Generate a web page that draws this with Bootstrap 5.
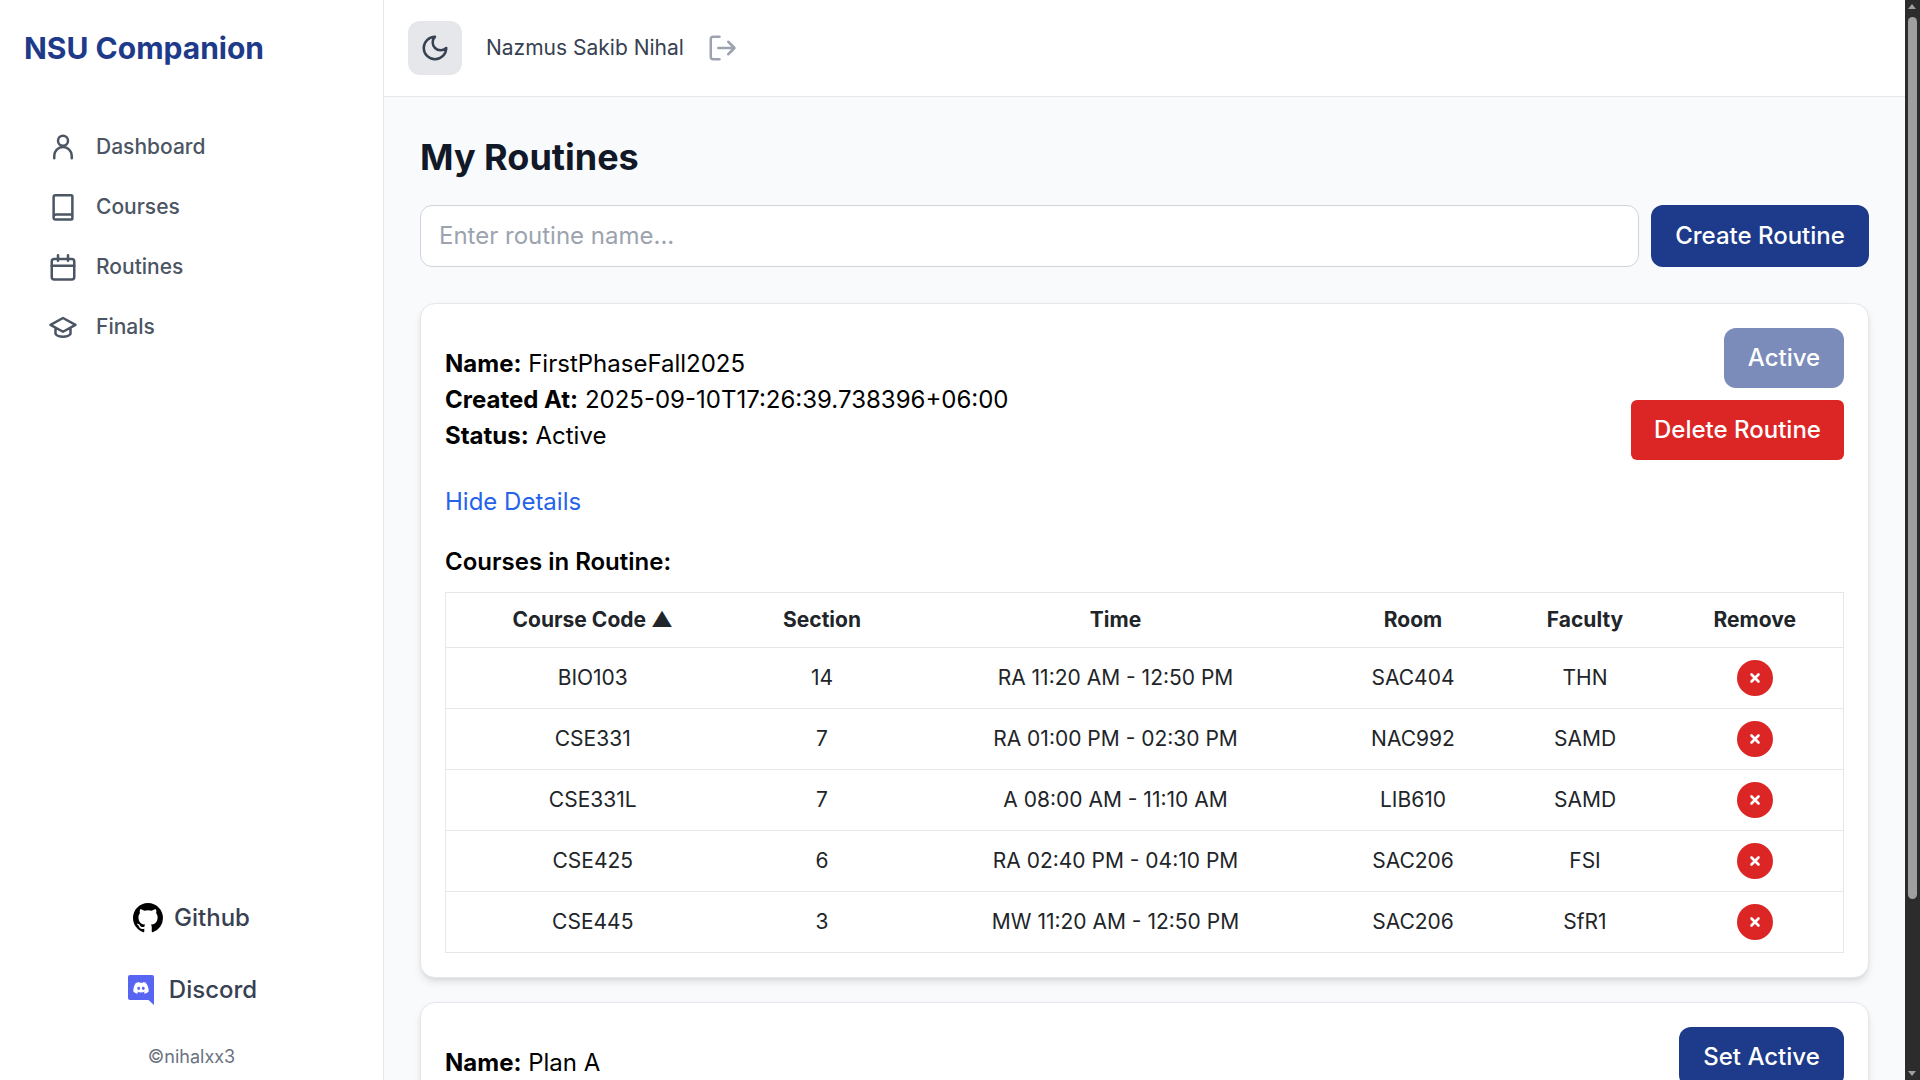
<!DOCTYPE html>
<html lang="en">
<head>
  <title>My Routines - NSU Companion</title>
  <link href="https://cdn.jsdelivr.net/npm/bootstrap@5.3.0/dist/css/bootstrap.min.css" rel="stylesheet" />
  <style>
    html, body { height: 100%; overflow: hidden; }
    body { font-family: Inter, "Liberation Sans", sans-serif; background: #f9fafb; color: #000; }
    .app-shell { height: 1080px; }
    .side-bar { width: 384px; background: #fff; border-right: 1px solid #e5e7eb; }
    .brand-name { font-size: 30px; font-weight: 700; line-height: 36px; color: #1e3a8a; padding: 30px 24px 0; }
    .side-nav { margin-top: 59px; padding: 0 48px; gap: 16px; }
    .side-link { height: 44px; gap: 18px; font-size: 21px; font-weight: 500; color: #4b5563; text-decoration: none; }
    .side-link svg { width: 30px; height: 30px; }
    .foot-link { font-size: 24px; font-weight: 500; color: #374151; text-decoration: none; line-height: 30px; }
    .gh-row { margin-bottom: 42px; gap: 11px; }
    .gh-row svg { width: 30px; height: 30px; }
    .dc-row { gap: 15px; padding-left: 2px; }
    .dc-row svg { width: 26px; height: 30px; }
    .copy-note { font-size: 18px; color: #6b7280; margin-top: 40px; margin-bottom: 11px; line-height: 24px; }
    .main-col { min-width: 0; }
    .top-bar { height: 97px; background: #fff; border-bottom: 1px solid #e5e7eb; padding: 0 24px; }
    .theme-btn { width: 54px; height: 54px; border: 0; border-radius: 12px; background: #e5e7eb; color: #374151; }
    .user-name { font-size: 21px; color: #374151; margin-left: 24px; margin-right: 23px; }
    .logout-ico { width: 30px; height: 30px; color: #9ca3af; }
    .page-body { padding: 30px 36px 0; }
    .page-title { font-size: 36px; font-weight: 700; line-height: 60px; color: #111827; margin-bottom: 18px; }
    .routine-input { height: 62px; font-size: 24px; border: 1px solid #d1d5db; border-radius: 12px; padding: 0 18px 2px; color: #111827; }
    .routine-input::placeholder { color: #9ca3af; }
    .btn-brand { background: #1e3a8a; color: #fff; border: 0; border-radius: 12px; font-size: 24px; font-weight: 500; padding: 0 24px; white-space: nowrap; }
    .btn-brand:hover { background: #1e3a8a; color: #fff; }
    .create-btn { height: 62px; margin-left: 12px; width: 218px; }
    .routine-card { border: 1px solid #e5e7eb; border-radius: 15px; background: #fff; padding: 24px; box-shadow: 0 5px 8px -1px rgba(0,0,0,.1), 0 2px 5px -2px rgba(0,0,0,.1); }
    .first-card { margin-top: 36px; height: 675px; }
    .next-card { margin-top: 24px; }
    .info-lines { font-size: 24px; line-height: 36px; padding-top: 18px; }
    .info-lines b { font-weight: 700; }
    .btn-active { height: 60px; width: 120px; padding: 0; opacity: .58; }
    .btn-set { height: 60px; width: 165px; padding: 0; }
    .btn-del { height: 60px; width: 213px; margin-top: 12px; background: #dc2626; color: #fff; border: 0; border-radius: 6px; font-size: 24px; font-weight: 500; white-space: nowrap; }
    .btn-del:hover { background: #dc2626; color: #fff; }
    .hide-link { display: block; font-size: 24px; line-height: 36px; color: #2563eb; text-decoration: none; margin-top: 24px; }
    .sub-head { font-size: 24px; font-weight: 600; line-height: 36px; margin: 24px 0 12px; }
    .course-table { table-layout: fixed; width: 100%; margin: 0; font-size: 21px; border-color: #e5e7eb; }
    .course-table th, .course-table td { padding: 0; text-align: center; vertical-align: middle; border: 1px solid #e5e7eb; border-left: 0; border-right: 0; }
    .course-table th { height: 55px; font-weight: 700; font-size: 21px; }
    .course-table td { height: 61px; font-weight: 400; }
    .course-table tr > :first-child { border-left: 1px solid #e5e7eb; }
    .course-table tr > :last-child { border-right: 1px solid #e5e7eb; padding-right: 4px; }
    .col-code { width: 294px; } .col-sect { width: 165px; } .col-time { width: 422px; }
    .col-room { width: 173px; } .col-fac { width: 171px; }
    .x-btn { display: block; margin: 0 auto; width: 36px; height: 36px; border: 0; border-radius: 50%; background: #dc2626; padding: 0; }
    .x-btn svg { width: 12px; height: 12px; display: block; margin: 0 auto; }
    .fake-scroll { width: 15px; background: #2c2c2c; position: relative; }
    .fake-thumb { position: absolute; left: 3px; right: 3px; top: 17px; height: 882px; background: #9f9f9f; border-radius: 5px; }
    .fake-arrow-up { position: absolute; top: 4px; left: 3px; border: 4.5px solid transparent; border-top: 0; border-bottom: 5px solid #9f9f9f; }
    .fake-arrow-down { position: absolute; bottom: 4px; left: 3px; border: 4.5px solid transparent; border-bottom: 0; border-top: 5px solid #9f9f9f; }
  </style>
</head>
<body>
  <div class="app-shell d-flex">
    <aside class="side-bar d-flex flex-column flex-shrink-0">
      <div class="brand-name">NSU Companion</div>
      <nav class="side-nav d-flex flex-column">
        <a class="side-link d-flex align-items-center" href="#">
          <svg viewBox="0 0 24 24" fill="none" stroke="currentColor" stroke-width="2" stroke-linecap="round" stroke-linejoin="round"><circle cx="12" cy="7" r="4"/><path d="M5 21v-2a7 7 0 0 1 14 0v2"/></svg>
          Dashboard
        </a>
        <a class="side-link d-flex align-items-center" href="#">
          <svg viewBox="0 0 24 24" fill="none" stroke="currentColor" stroke-width="2" stroke-linecap="round" stroke-linejoin="round"><path d="M4.500 20V4a1.500 1.500 0 0 1 1.500-1.500h12.500A1 1 0 0 1 19.500 3.500v17.500a1 1 0 0 1-1 1H6A1.500 1.500 0 0 1 4.500 20zm0 0A2 2 0 0 1 6.500 18h13"/></svg>
          Courses
        </a>
        <a class="side-link d-flex align-items-center" href="#">
          <svg viewBox="0 0 24 24" fill="none" stroke="currentColor" stroke-width="2" stroke-linecap="round" stroke-linejoin="round"><rect x="3" y="5.500" width="18" height="16.500" rx="2"/><path d="M8 2.500v4.500M16 2.500v4.500M3 11h18"/></svg>
          Routines
        </a>
        <a class="side-link d-flex align-items-center" href="#">
          <svg viewBox="0 0 24 24" fill="none" stroke="currentColor" stroke-width="2" stroke-linecap="round" stroke-linejoin="round"><path d="M12 4.800 2 10.300 12 15.800l10-5.500zM6 13v4.500c2 3 10 3 12 0V13"/></svg>
          Finals
        </a>
      </nav>
      <div class="mt-auto d-flex flex-column align-items-center">
        <a class="foot-link gh-row d-flex align-items-center" href="#">
          <svg viewBox="0 0 16 16" fill="#000"><path d="M8 0C3.58 0 0 3.58 0 8c0 3.54 2.29 6.53 5.47 7.59.4.07.55-.17.55-.38 0-.19-.01-.82-.01-1.49-2.01.37-2.53-.49-2.69-.94-.09-.23-.48-.94-.82-1.13-.28-.15-.68-.52-.01-.53.63-.01 1.08.58 1.23.82.72 1.21 1.87.87 2.33.66.07-.52.28-.87.51-1.07-1.78-.2-3.64-.89-3.64-3.95 0-.87.31-1.59.82-2.15-.08-.2-.36-1.02.08-2.12 0 0 .67-.21 2.2.82.64-.18 1.32-.27 2-.27s1.36.09 2 .27c1.53-1.04 2.2-.82 2.2-.82.44 1.1.16 1.92.08 2.12.51.56.82 1.27.82 2.15 0 3.07-1.87 3.75-3.65 3.95.29.25.54.73.54 1.48 0 1.07-.01 1.93-.01 2.2 0 .21.15.46.55.38A8.01 8.01 0 0 0 16 8c0-4.42-3.58-8-8-8z"/></svg>
          Github
        </a>
        <a class="foot-link dc-row d-flex align-items-center" href="#">
          <svg viewBox="0 0 26 30"><path fill="#5865f2" d="M2 0h22a2 2 0 0 1 2 2v28l-5.500-5H2a2 2 0 0 1-2-2V2a2 2 0 0 1 2-2z"/><path fill="#fff" d="M17.600 7.600a13 13 0 0 0-3.200-1l-.4.8a12 12 0 0 0-3.600 0l-.4-.8a13 13 0 0 0-3.200 1C4.700 10.600 4.200 13.500 4.400 16.400c1.300 1 2.600 1.600 3.900 2l.8-1.300-1.200-.6.3-.2c2.300 1.100 5.300 1.100 7.600 0l.3.2-1.200.6.8 1.300c1.300-.4 2.600-1 3.900-2 .3-3.300-.5-6.200-2.800-8.800zM9.700 14.500c-.8 0-1.400-.7-1.400-1.600s.6-1.600 1.400-1.600 1.400.7 1.400 1.600-.6 1.600-1.400 1.600zm4.600 0c-.8 0-1.400-.7-1.400-1.600s.6-1.600 1.400-1.600 1.400.7 1.400 1.600-.6 1.600-1.400 1.600z" transform="translate(1 .4)"/></svg>
          Discord
        </a>
        <div class="copy-note">©nihalxx3</div>
      </div>
    </aside>

    <div class="main-col flex-grow-1 d-flex flex-column">
      <header class="top-bar d-flex align-items-center flex-shrink-0">
        <button class="theme-btn d-flex align-items-center justify-content-center" type="button">
          <svg width="30" height="30" viewBox="0 0 24 24" fill="none" stroke="currentColor" stroke-width="2" stroke-linecap="round" stroke-linejoin="round"><path d="M12 3a6 6 0 0 0 9 9 9 9 0 1 1-9-9z"/></svg>
        </button>
        <span class="user-name">Nazmus Sakib Nihal</span>
        <svg class="logout-ico" viewBox="0 0 24 24" fill="none" stroke="currentColor" stroke-width="2" stroke-linecap="round" stroke-linejoin="round"><path d="M10 3H5a2 2 0 0 0-2 2v14a2 2 0 0 0 2 2h5M9 12h13M17 7l5 5-5 5"/></svg>
      </header>

      <main class="page-body flex-grow-1 overflow-hidden">
        <h1 class="page-title">My Routines</h1>
        <div class="d-flex">
          <input class="routine-input form-control flex-grow-1" type="text" placeholder="Enter routine name..." />
          <button class="btn btn-brand create-btn flex-shrink-0" type="button">Create Routine</button>
        </div>

        <section class="routine-card first-card">
          <div class="d-flex justify-content-between align-items-start">
            <div class="info-lines">
              <div><b>Name:</b> FirstPhaseFall2025</div>
              <div><b>Created At:</b> 2025-09-10T17:26:39.738396+06:00</div>
              <div><b>Status:</b> Active</div>
            </div>
            <div class="d-flex flex-column align-items-end">
              <button class="btn btn-brand btn-active" type="button">Active</button>
              <button class="btn btn-del" type="button">Delete Routine</button>
            </div>
          </div>
          <a class="hide-link" href="#">Hide Details</a>
          <h2 class="sub-head">Courses in Routine:</h2>
          <table class="table course-table">
            <thead>
              <tr>
                <th class="col-code">Course Code ▲</th>
                <th class="col-sect">Section</th>
                <th class="col-time">Time</th>
                <th class="col-room">Room</th>
                <th class="col-fac">Faculty</th>
                <th>Remove</th>
              </tr>
            </thead>
            <tbody id="courseRows"></tbody>
          </table>
        </section>

        <section class="routine-card next-card">
          <div class="d-flex justify-content-between align-items-start">
            <div class="info-lines">
              <div><b>Name:</b> Plan A</div>
            </div>
            <button class="btn btn-brand btn-set" type="button">Set Active</button>
          </div>
        </section>
      </main>
    </div>

    <div class="fake-scroll flex-shrink-0">
      <div class="fake-arrow-up"></div>
      <div class="fake-thumb"></div>
      <div class="fake-arrow-down"></div>
    </div>
  </div>

  <script src="https://cdn.jsdelivr.net/npm/bootstrap@5.3.0/dist/js/bootstrap.bundle.min.js"></script>
  <script>
    const courses = [
      ['BIO103', '14', 'RA 11:20 AM - 12:50 PM', 'SAC404', 'THN'],
      ['CSE331', '7', 'RA 01:00 PM - 02:30 PM', 'NAC992', 'SAMD'],
      ['CSE331L', '7', 'A 08:00 AM - 11:10 AM', 'LIB610', 'SAMD'],
      ['CSE425', '6', 'RA 02:40 PM - 04:10 PM', 'SAC206', 'FSI'],
      ['CSE445', '3', 'MW 11:20 AM - 12:50 PM', 'SAC206', 'SfR1'],
    ];
    const xBtn = '<button class="x-btn" type="button"><svg viewBox="0 0 12 12" fill="none" stroke="#fff" stroke-width="2.6" stroke-linecap="round"><path d="M2.500 2.500l7 7M9.500 2.500l-7 7"/></svg></button>';
    document.getElementById('courseRows').innerHTML = courses.map(c =>
      `<tr>${c.map(v => `<td>${v}</td>`).join('')}<td>${xBtn}</td></tr>`
    ).join('');
  </script>
</body>
</html>
